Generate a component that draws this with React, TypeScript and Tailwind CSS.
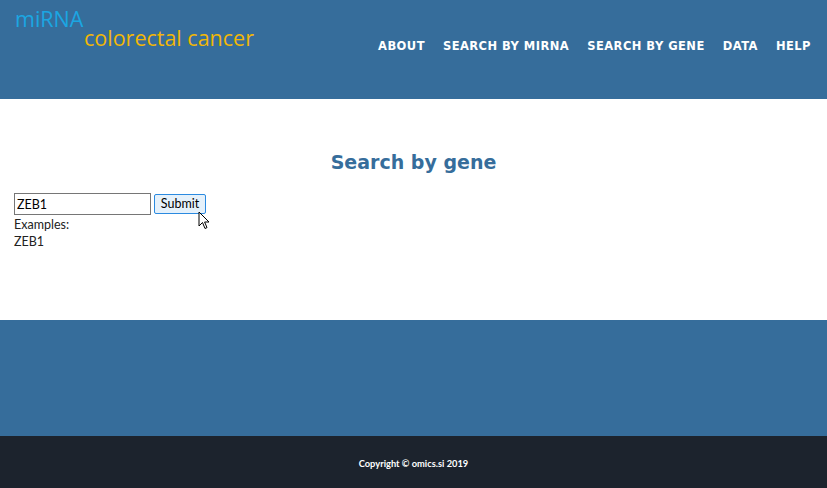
import React from 'react';

const NAV = ['About', 'Search by miRNA', 'Search by gene', 'Data', 'Help'];

export default function App() {
  return (
    <div className="flex min-h-[488px] w-full flex-col bg-white">
      {/* header */}
      <header className="flex h-[99px] items-start justify-between bg-[#366d9b] pr-[16px]">
        <div className="relative ml-[15px] mt-[8px] h-[44px] w-[250px] font-['Open_Sans',sans-serif] text-[21.5px] leading-none">
          <span className="absolute left-0 top-0 text-[#1ba6e2]">miRNA</span>
          <span className="absolute left-[69px] top-[19px] text-[#f2b705]">colorectal cancer</span>
        </div>
        <nav className="mt-[39px] flex gap-[18px] font-['DejaVu_Sans',sans-serif] text-[11.5px] font-bold uppercase leading-[14px] tracking-[0.45px] text-white">
          {NAV.map((n) => (
            <a key={n} href="#">
              {n}
            </a>
          ))}
        </nav>
      </header>

      {/* main */}
      <main className="h-[221px] px-[14px] pt-[50px] font-['Lato',sans-serif] text-[12.5px] text-[#222]">
        <h1 className="text-center font-['DejaVu_Sans',sans-serif] text-[19px] font-bold leading-[26px] text-[#366d9b]">
          Search by gene
        </h1>
        <div className="relative mt-[18px] flex items-center gap-[3px]">
          <input
            defaultValue="ZEB1"
            className="h-[22px] w-[137px] border border-[#767676] px-[2px] text-[12.5px] text-black outline-none"
          />
          <button className="h-[20px] w-[52px] rounded-[2px] border border-[#2b8ae0] bg-[#e5f1fb] text-[12.5px] leading-none text-black">
            Submit
          </button>
          {/* cursor */}
          <svg className="absolute left-[184px] top-[18px]" width="12" height="19" viewBox="0 0 12 19">
            <path d="M1 1 L1 15 L4.5 11.5 L7 17.5 L9 16.6 L6.6 11 L11 11 Z" fill="#fff" stroke="#000" strokeWidth="1" strokeLinejoin="round" />
          </svg>
        </div>
        <p className="mt-[2px] leading-[16px]">Examples:</p>
        <p className="mt-[1px] leading-[16px]">ZEB1</p>
      </main>

      <section className="h-[116px] bg-[#366d9b]" />

      <footer className="flex h-[52px] items-center justify-center bg-[#1c232d] pt-[4px] font-['Lato',sans-serif] text-[9.3px] font-bold text-white">
        Copyright © omics.si 2019
      </footer>
    </div>
  );
}
